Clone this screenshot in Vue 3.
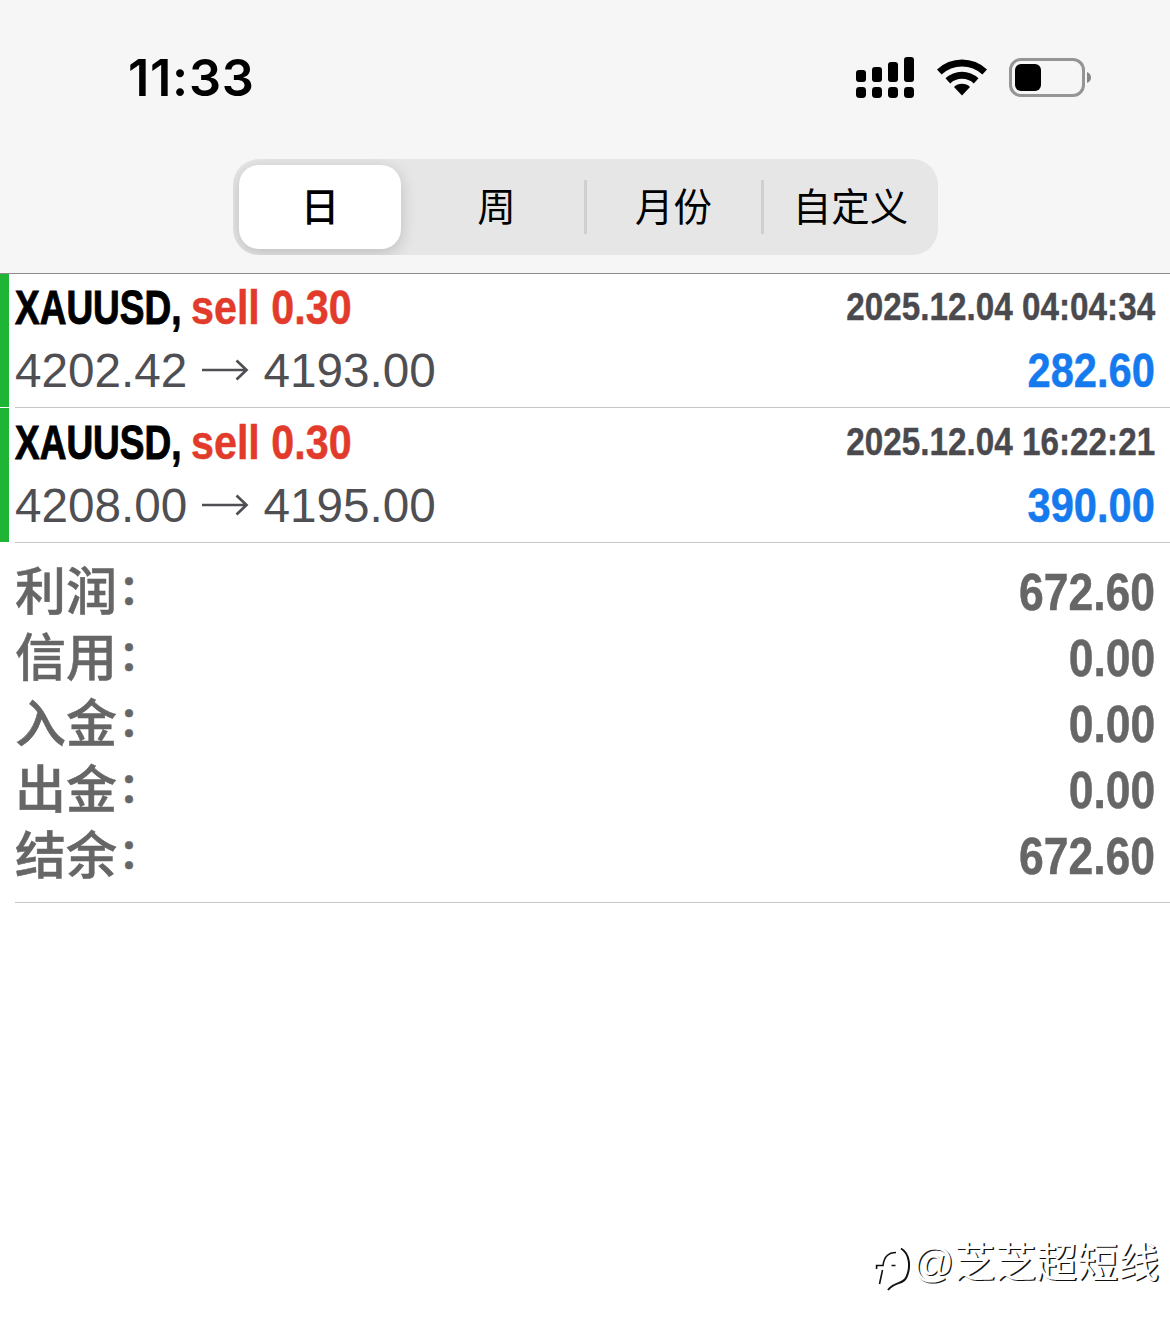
<template>
	<div class="screen">
		<header class="top">
			<div class="status">
				<span class="clock">11:33</span>
				<div class="status-icons">
					<svg class="signal" width="60" height="44" viewBox="0 0 60 44">
						<rect x="1" y="15" width="10" height="12" rx="3" />
						<rect x="17" y="12" width="10" height="15" rx="3" />
						<rect x="33" y="7" width="10" height="20" rx="3" />
						<rect x="49" y="2" width="10" height="25" rx="3" />
						<rect v-for="n in 4" :key="n" :x="n * 16 - 15" y="32" width="10" height="11" rx="3.4" />
					</svg>
					<svg class="wifi" width="52" height="40" viewBox="0 0 52 40">
						<path d="M1 12.5 A36 36 0 0 1 51 12.5 L46.4 17.6 A29.5 29.5 0 0 0 5.6 17.6 Z" />
						<path d="M9.5 21.3 A24 24 0 0 1 42.5 21.3 L37.800 26.400 A17.5 17.5 0 0 0 14.200 26.400 Z" />
						<path d="M18 30 A11.3 11.3 0 0 1 34 30 L26 38.5 Z" />
					</svg>
					<svg class="battery" width="84" height="40" viewBox="0 0 84 40">
						<rect x="1.5" y="1.5" width="73" height="36" rx="10.5" fill="none" stroke="#959595" stroke-width="3" />
						<rect x="6" y="6" width="26" height="27" rx="6" />
						<path d="M78 14 Q82 15.500 82 19.500 Q82 23.500 78 25 Z" fill="#868686" />
					</svg>
				</div>
			</div>

			<nav class="tabs">
				<button
					v-for="(tab, index) in tabs"
					:key="tab"
					class="tab"
					:class="{ active: index === actual, line: index > actual + 1 }"
					@click="actual = index"
				>{{ tab }}</button>
			</nav>
		</header>

		<div v-for="(op, index) in operaciones" :key="index" class="deal">
			<div class="deal-row first">
				<div class="deal-name">
					<span class="symbol">{{ op.symbol }},</span>
					<span class="side">{{ op.side }} {{ op.volume }}</span>
				</div>
				<span class="date">{{ op.date }}</span>
			</div>
			<div class="deal-row second">
				<div class="prices">
					<span>{{ op.open }}</span>
					<svg class="arrow" width="47" height="22" viewBox="0 0 47 22">
						<path d="M0 11 H44 M34.500 1.500 L44.500 11 L34.500 20.500" />
					</svg>
					<span>{{ op.close }}</span>
				</div>
				<span class="profit">{{ op.profit }}</span>
			</div>
		</div>

		<section class="totals">
			<div v-for="item in totales" :key="item.label" class="total">
				<span class="label">{{ item.label }}<span class="colon">：</span></span>
				<span class="amount">{{ item.value }}</span>
			</div>
		</section>

		<div class="mark">
			<svg class="logo" width="38" height="50" viewBox="0 0 38 50">
				<path d="M2.600 25 V21.500 H9 C10 13 14 8.500 22 8.500 M8.500 26 L5.500 40 M17.500 21.500 H21.500" />
				<path class="thick" d="M27 4.500 C36.500 10 36.500 24 32.500 33 C29 41 21 37 14 46" />
			</svg>
			<span class="author">@芝芝超短线</span>
		</div>
	</div>
</template>

<script setup>
	import { ref } from 'vue';

	const tabs = ['日', '周', '月份', '自定义'];
	const actual = ref(0);

	const operaciones = ref([
		{ symbol: 'XAUUSD', side: 'sell', volume: '0.30', date: '2025.12.04 04:04:34', open: '4202.42', close: '4193.00', profit: '282.60' },
		{ symbol: 'XAUUSD', side: 'sell', volume: '0.30', date: '2025.12.04 16:22:21', open: '4208.00', close: '4195.00', profit: '390.00' }
	]);

	const totales = ref([
		{ label: '利润', value: '672.60' },
		{ label: '信用', value: '0.00' },
		{ label: '入金', value: '0.00' },
		{ label: '出金', value: '0.00' },
		{ label: '结余', value: '672.60' }
	]);
</script>

<style>
	body {
		background: #fff;
	}
</style>

<style scoped>
	.screen {
		position: relative;
		width: 1170px;
		height: 1330px;
		overflow: hidden;
		background: #fff;
		font-family: "Liberation Sans", "Noto Sans CJK SC", sans-serif;
	}

	.top {
		box-sizing: border-box;
		height: 274px;
		background: #f6f6f6;
		border-bottom: 1px solid #8c8c8c;
	}

	.status {
		display: flex;
		justify-content: space-between;
		height: 159px;
		padding: 0 77px 0 128px;
	}

	.clock {
		margin-top: 48px;
		font: 600 50.5px/60px Inter, sans-serif;
		letter-spacing: 0.7px;
		color: #000;
	}

	.status-icons {
		display: flex;
		align-items: flex-start;
	}

	.signal {
		margin: 55px 21px 0 0;
	}

	.wifi {
		margin: 57px 21px 0 0;
	}

	.battery {
		margin-top: 58px;
	}

	.tabs {
		display: flex;
		box-sizing: border-box;
		width: 705px;
		height: 96px;
		margin-left: 233px;
		padding: 6px;
		border-radius: 26px;
		background: #e6e6e7;
		overflow: hidden;
	}

	.tab {
		position: relative;
		box-sizing: border-box;
		flex: none;
		width: 177px;
		height: 84px;
		padding: 2px 0 0 2px;
		border: 0;
		background: none;
		font: 400 38.5px/82px "Liberation Sans", "Noto Sans CJK SC", sans-serif;
		color: #000;
	}

	.tab.active {
		width: 162px;
		margin-right: 6px;
		padding-left: 0;
		border-radius: 20px;
		background: #fff;
		font-weight: 500;
		box-shadow: 0 4px 16px rgba(0, 0, 0, 0.18);
	}

	.tab.line::before {
		content: "";
		position: absolute;
		left: 0;
		top: 15px;
		width: 3px;
		height: 54px;
		background: #d0d0d1;
	}

	/* Operaciones cerradas */
	.deal {
		position: relative;
		height: 133px;
		margin-left: 15px;
		border-bottom: 1px solid #c5c5c6;
	}

	.deal + .deal {
		height: 133px;
		padding-top: 1px;
	}

	.deal::before {
		content: "";
		position: absolute;
		left: -15px;
		top: 0;
		bottom: 0;
		width: 9px;
		background: #1eb534;
	}

	.deal-row {
		display: flex;
		justify-content: space-between;
		padding-right: 15px;
		white-space: nowrap;
	}

	.first {
		height: 66px;
		line-height: 66px;
	}

	.second {
		height: 62px;
		line-height: 62px;
	}

	.deal-name {
		display: flex;
		font-size: 49px;
		font-weight: bold;
	}

	.symbol {
		width: 176px;
		color: #000;
		-webkit-text-stroke: 1px #000;
		transform: scaleX(0.755);
		transform-origin: left;
	}

	.side {
		color: #e23b2b;
		-webkit-text-stroke: 0.5px #e23b2b;
		transform: scaleX(0.842);
		transform-origin: left;
	}

	.date {
		font-size: 39px;
		font-weight: bold;
		color: #4a4a4e;
		-webkit-text-stroke: 0.4px #4a4a4e;
		transform: scaleX(0.853);
		transform-origin: right;
	}

	.prices {
		display: flex;
		font-size: 47.7px;
		color: #4f4f53;
	}

	.arrow {
		margin: 19px 14px 0 15px;
		fill: none;
		stroke: #4f4f53;
		stroke-width: 2.7;
	}

	.profit {
		font-size: 49px;
		font-weight: bold;
		line-height: 61px;
		color: #147aee;
		-webkit-text-stroke: 0.5px #147aee;
		transform: scaleX(0.85);
		transform-origin: right;
	}

	/* Resumen */
	.totals {
		box-sizing: border-box;
		height: 360px;
		margin-left: 15px;
		padding: 16px 15px 0 0;
		border-bottom: 1px solid #c5c5c6;
	}

	.total {
		display: flex;
		justify-content: space-between;
		height: 66px;
		line-height: 66px;
		color: #666;
	}

	.label {
		padding-top: 1px;
		font-size: 51px;
		font-weight: 500;
		-webkit-text-stroke: 0.5px #666;
	}

	.colon {
		position: relative;
		top: -6px;
		left: 2px;
		font-size: 40px;
		font-weight: bold;
		line-height: 1;
	}

	.amount {
		font-size: 52px;
		font-weight: bold;
		-webkit-text-stroke: 0.5px #666;
		transform: scaleX(0.855);
		transform-origin: right;
	}

	/* Marca sobre la pantalla */
	.mark {
		position: absolute;
		right: 11px;
		top: 1234px;
		display: flex;
		font-size: 41px;
		line-height: 57px;
		color: #fff;
		text-shadow: 1.4px 1.4px 0 #111;
		white-space: nowrap;
	}

	.author {
		padding-top: 1px;
	}

	.logo {
		margin-top: 10px;
		fill: none;
		stroke: #111;
		stroke-width: 1.6;
	}

	.logo .thick {
		stroke-width: 2;
	}
</style>
